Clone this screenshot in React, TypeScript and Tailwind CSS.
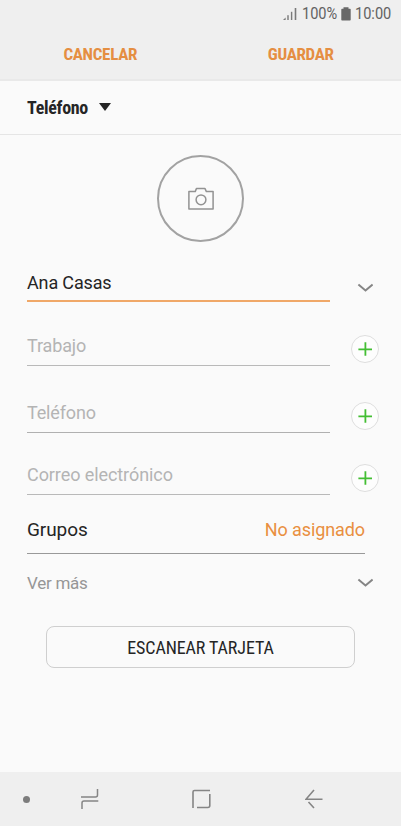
import React from 'react';

const ChevronDown: React.FC = () => (
  <svg width="16" height="10" viewBox="0 0 16 10" fill="none" stroke="#858585" strokeWidth="2">
    <path d="M1.4 1.6 L8.5 7.4 L15.6 1.6" />
  </svg>
);

const AddButton: React.FC = () => (
  <button className="mb-[3px] flex size-7 items-center justify-center rounded-full border border-[#dedede] bg-[#fdfdfd]">
    <svg width="14" height="14" viewBox="0 0 14 14" stroke="#43be33" strokeWidth="1.8">
      <path d="M7.4 0.3 V13.7 M0.4 7.3 H14" />
    </svg>
  </button>
);

const SignalIcon: React.FC = () => (
  <svg width="14" height="13" viewBox="0 0 14 13" fill="#7a7a7a">
    <path d="M0 12 L2.6 9.5 V12 Z" />
    <rect x="4.3" y="7.2" width="1.4" height="4.8" />
    <rect x="7.9" y="3.8" width="1.4" height="8.2" />
    <rect x="11.7" y="0" width="1.6" height="12" />
  </svg>
);

const BatteryIcon: React.FC = () => (
  <svg width="10" height="14" viewBox="0 0 10 14" fill="#686868">
    <path d="M2.5 0.3 H7.5 V1.8 H9 Q9.7 1.8 9.7 2.6 V12.8 Q9.7 13.6 9 13.6 H1 Q0.3 13.6 0.3 12.8 V2.6 Q0.3 1.8 1 1.8 H2.5 Z" />
  </svg>
);

const CameraIcon: React.FC = () => (
  <svg width="26" height="26" viewBox="0 0 26 26" fill="none" stroke="#929292" strokeWidth="1.5" strokeLinejoin="round">
    <path d="M0.9 5.6 H7.2 L8.4 2.6 H17 L18.4 5.6 H25.1 V23.1 H0.9 Z" />
    <circle cx="13" cy="13.8" r="4.9" />
  </svg>
);

interface FieldProps {
  label: string;
  className: string;
  inputClassName: string;
  action: React.ReactNode;
}

const Field: React.FC<FieldProps> = ({ label, className, inputClassName, action }) => (
  <div className={`flex items-end justify-between pl-[27px] ${className}`}>
    <div className={`w-[303px] text-[18px] leading-6 ${inputClassName}`}>{label}</div>
    {action}
  </div>
);

export default function App() {
  return (
    <div className="flex h-[826px] w-[401px] flex-col overflow-hidden bg-[#fafafa] font-['Roboto',sans-serif] text-[#252525]">
      <header className="h-[81px] border-b-2 border-[#e9e9e9] bg-[#efefef]">
        <div className="flex h-7 items-center justify-end pr-[9px] text-[16px] text-[#626262]">
          <SignalIcon />
          <span className="ml-[5px] w-[35px] origin-left scale-x-[0.91] whitespace-nowrap">100%</span>
          <span className="ml-[4px]"><BatteryIcon /></span>
          <span className="ml-[4px] w-[37px] origin-left scale-x-[0.91] whitespace-nowrap">10:00</span>
        </div>
        <div className="grid grid-cols-2 pt-[14px] text-center text-[17px] leading-6 font-bold tracking-[-0.3px] text-[#e58e42]">
          <button className="[font-stretch:75%] font-['Roboto_Condensed','Roboto',sans-serif]">CANCELAR</button>
          <button className="[font-stretch:75%] font-['Roboto_Condensed','Roboto',sans-serif]">GUARDAR</button>
        </div>
      </header>

      <div className="flex h-[54px] items-center border-b border-[#e5e5e5] pl-[27px]">
        <span className="[font-stretch:75%] font-['Roboto_Condensed','Roboto',sans-serif] text-[18px] font-bold tracking-[-0.3px]">Teléfono</span>
        <svg className="mb-[2px] ml-[11px]" width="12" height="8" viewBox="0 0 12 8" fill="#252525">
          <path d="M0 0 H12 L6 8 Z" />
        </svg>
      </div>

      <main className="flex flex-1 flex-col">
        <div className="mt-[20px] ml-[157px] flex size-[87px] items-center justify-center rounded-full border-2 border-[#a2a2a2]">
          <CameraIcon />
        </div>

        <Field
          label="Ana Casas"
          className="h-[60px] pr-[28px]"
          inputClassName="h-[31px] border-b-2 border-[#f0a868] tracking-[-0.15px]"
          action={<span className="pb-[9px]"><ChevronDown /></span>}
        />
        <Field
          label="Trabajo"
          className="h-[64px] pr-[22px]"
          inputClassName="h-[32px] border-b border-[#b9b9b9] tracking-[-0.15px] text-[#b4b4b4]"
          action={<AddButton />}
        />
        <Field
          label="Teléfono"
          className="h-[67px] pr-[22px]"
          inputClassName="h-[32px] border-b border-[#b0b0b0] tracking-[-0.15px] text-[#b4b4b4]"
          action={<AddButton />}
        />
        <Field
          label="Correo electrónico"
          className="h-[62px] pr-[22px]"
          inputClassName="h-[32px] border-b border-[#b9b9b9] tracking-[-0.08px] text-[#b4b4b4]"
          action={<AddButton />}
        />

        <div className="mr-[36px] ml-[27px] flex h-[59px] items-center justify-between border-b border-[#999] pt-[12px]">
          <span className="text-[19px] tracking-[-0.08px]">Grupos</span>
          <span className="pb-px text-[18px] tracking-[-0.1px] text-[#e98f40]">No asignado</span>
        </div>
        <div className="flex h-[58px] items-center justify-between pr-[28px] pl-[27px] text-[17px] text-[#969696]">
          <span className="pt-[2px] tracking-[-0.25px]">Ver más</span>
          <ChevronDown />
        </div>

        <button className="mt-[14px] ml-[46px] h-[42px] w-[309px] rounded-lg border border-[#cfcfcf] font-['Roboto_Condensed','Roboto',sans-serif] text-[18px] tracking-[-0.1px] [font-stretch:75%]">
          ESCANEAR TARJETA
        </button>
      </main>

      <nav className="flex h-[54px] items-center bg-[#efefef] pl-[23px]">
        <span className="size-[7px] rounded-full bg-[#7c7c7c]" />
        <svg className="ml-[50px]" width="20" height="22" viewBox="0 0 20 22" fill="none" stroke="#858585" strokeWidth="1.5">
          <path d="M1 9 H15.5 Q17.5 9 17.5 7 V1 M18.3 13 H4 Q2 13 2 15 V21" />
        </svg>
        <svg className="ml-[92px]" width="20" height="20" viewBox="0 0 20 20" fill="none" stroke="#858585" strokeWidth="1.6">
          <path d="M1 19 V3 Q1 1.5 2.5 1.5 H18 M17.8 5 V16.5 Q17.8 18.5 15.8 18.5 H5" />
        </svg>
        <svg className="ml-[93px]" width="18" height="20" viewBox="0 0 18 20" fill="none" stroke="#858585" strokeWidth="1.6">
          <path d="M17.5 10.2 H1 L9 1 M3.5 13 L9 19" />
        </svg>
      </nav>
    </div>
  );
}
